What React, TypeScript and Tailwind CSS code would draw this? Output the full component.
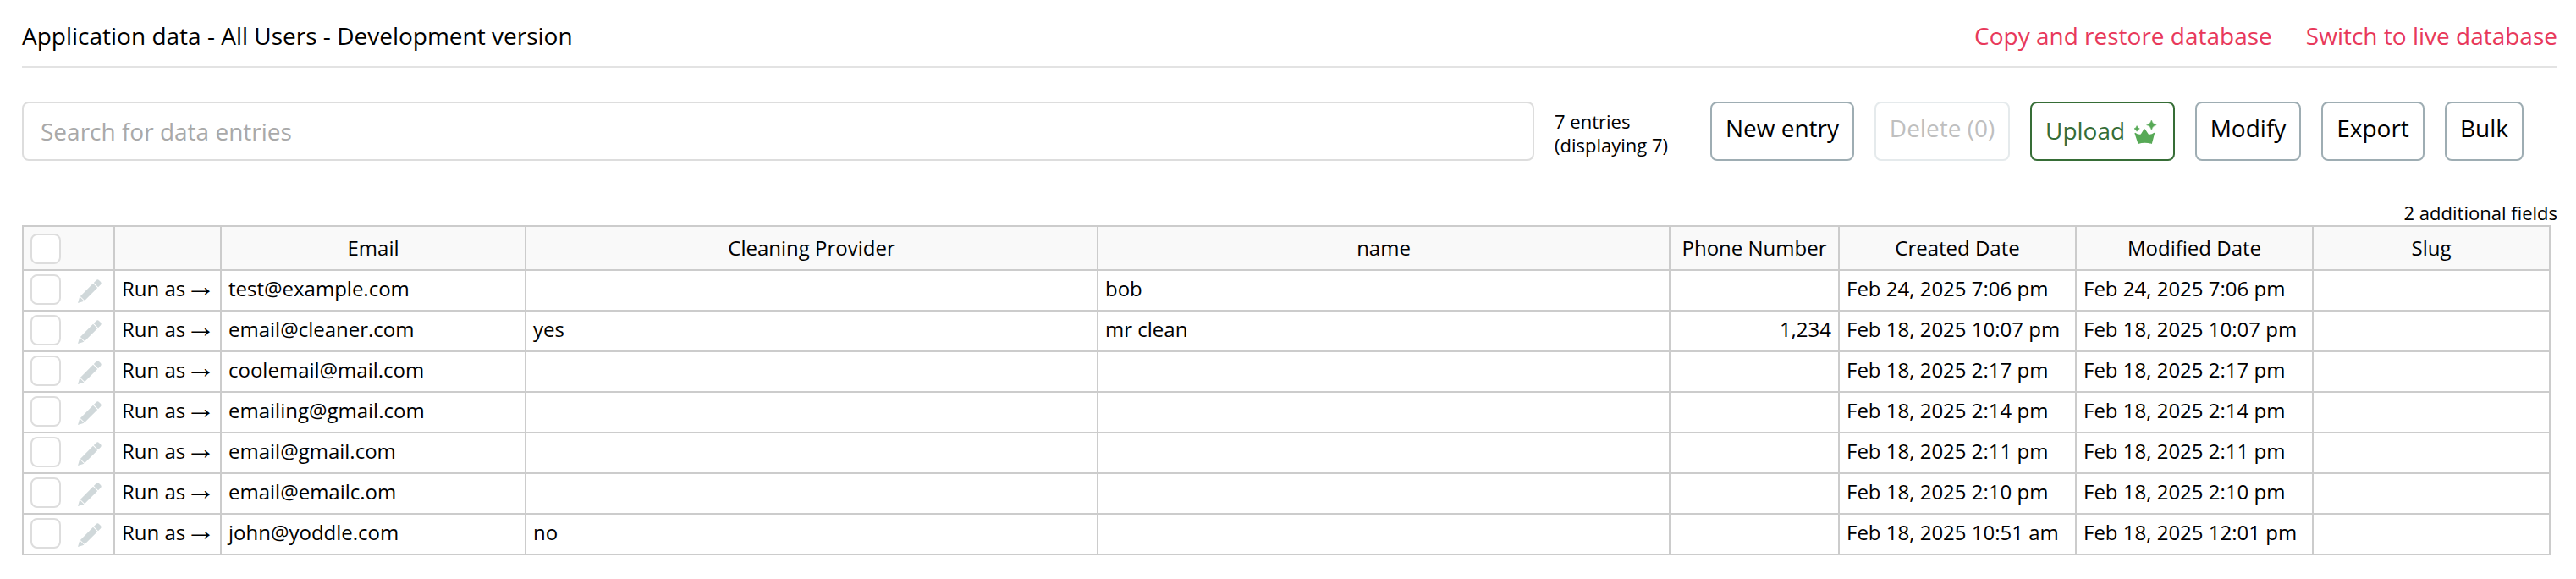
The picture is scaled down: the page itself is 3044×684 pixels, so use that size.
import React from "react";

type Entry = {
  email: string;
  provider?: string;
  name?: string;
  phone?: string;
  created: string;
  modified: string;
};

const entries: Entry[] = [
  { email: "test@example.com", name: "bob", created: "Feb 24, 2025 7:06 pm", modified: "Feb 24, 2025 7:06 pm" },
  { email: "email@cleaner.com", provider: "yes", name: "mr clean", phone: "1,234", created: "Feb 18, 2025 10:07 pm", modified: "Feb 18, 2025 10:07 pm" },
  { email: "coolemail@mail.com", created: "Feb 18, 2025 2:17 pm", modified: "Feb 18, 2025 2:17 pm" },
  { email: "emailing@gmail.com", created: "Feb 18, 2025 2:14 pm", modified: "Feb 18, 2025 2:14 pm" },
  { email: "email@gmail.com", created: "Feb 18, 2025 2:11 pm", modified: "Feb 18, 2025 2:11 pm" },
  { email: "email@emailc.om", created: "Feb 18, 2025 2:10 pm", modified: "Feb 18, 2025 2:10 pm" },
  { email: "john@yoddle.com", provider: "no", created: "Feb 18, 2025 10:51 am", modified: "Feb 18, 2025 12:01 pm" },
];

const headers = ["Email", "Cleaning Provider", "name", "Phone Number", "Created Date", "Modified Date", "Slug"];

function Checkbox() {
  return <span className="block size-9 shrink-0 rounded-lg border-2 border-[#dddddd] bg-white" />;
}

function Pencil() {
  return (
    <svg viewBox="0 0 28 28" className="size-7 shrink-0" fill="#d0d8da">
      <path d="M0 28 L2.2 20.6 L7.4 25.8 Z" />
      <path d="M2.9 19.9 L18 4.8 L23.2 10 L8.1 25.1 Z" />
      <path d="M18.8 4 L21.6 1.2 Q23.4 -0.6 25.2 1.2 L26.8 2.8 Q28.6 4.6 26.8 6.4 L24 9.2 Z" />
    </svg>
  );
}

function Crown() {
  return (
    <svg viewBox="0 0 27 28" className="h-7 w-[27px] shrink-0" fill="#57a956">
      <path d="M1.2 14.7 Q4.5 17.6 7.8 16.6 L11.4 10.8 Q12.2 9.6 13 10.8 L16.8 16.6 Q20 17.6 23.4 14.7 Q24.4 14.8 24 16 L20.8 28 Q12.7 25.6 4.6 28 L0.6 16 Q0.2 14.8 1.2 14.7 Z" />
      <path d="M20.4 0 Q21.4 4.6 26.2 5.6 Q21.4 6.6 20.4 11.4 Q19.4 6.6 14.6 5.6 Q19.4 4.6 20.4 0 Z" stroke="#57a956" strokeWidth="0.5" />
      <path d="M3.1 6.6 Q3.6 9.3 6.3 9.9 Q3.6 10.5 3.1 13.2 Q2.6 10.5 0 9.9 Q2.6 9.3 3.1 6.6 Z" stroke="#57a956" strokeWidth="0.6" />
    </svg>
  );
}

const buttonBase = "flex h-[70px] shrink-0 justify-center rounded-lg border-2 pt-[10px] text-[28px] leading-[38px]";

export default function App() {
  return (
    <div className="h-[684px] w-[3044px] overflow-hidden bg-white pl-[26px] pr-[22px] font-['Open_Sans',sans-serif] text-black">
      <header className="flex h-20 items-start justify-between border-b-2 border-[#e3e3e3] pt-[23px] text-[28px] leading-[38px]">
        <h1>Application data - All Users - Development version</h1>
        <nav className="flex gap-10 text-[#e8395b]">
          <a>Copy and restore database</a>
          <a>Switch to live database</a>
        </nav>
      </header>

      <div className="mt-10 flex h-[70px] items-start">
        <input
          className="h-[70px] w-[1787px] shrink-0 rounded-lg border-2 border-[#dddddd] px-5 text-[28px] placeholder:text-[#a9a9a9]"
          placeholder="Search for data entries"
        />
        <div className="ml-6 w-[184px] shrink-0 pt-[9px] text-[22px] leading-7">
          7 entries
          <br />
          (displaying 7)
        </div>
        <div className="flex gap-6">
          <button className={`${buttonBase} w-[170px] border-[#9eadb3]`}>New entry</button>
          <button className={`${buttonBase} w-[160px] border-[#e5eaec] text-[#bfbfbf]`}>Delete (0)</button>
          <button className="flex h-[70px] w-[171px] shrink-0 items-start gap-[11px] rounded-lg border-2 border-[#366d36] pl-4 pt-[13px] text-[28px] leading-[38px] text-[#366d36]">
            Upload
            <span className="mt-[7px]">
              <Crown />
            </span>
          </button>
          <button className={`${buttonBase} w-[125px] border-[#9eadb3]`}>Modify</button>
          <button className={`${buttonBase} w-[122px] border-[#9eadb3]`}>Export</button>
          <button className={`${buttonBase} w-[93px] border-[#9eadb3]`}>Bulk</button>
        </div>
      </div>

      <div className="mt-[46px] h-[30px] text-right text-[22px] leading-[30px]">2 additional fields</div>

      <table className="w-[2988px] table-fixed border-collapse text-[24px] leading-[33px] [&_td]:border-2 [&_td]:border-[#cccccc] [&_td]:px-2 [&_td]:pb-0 [&_td]:pt-1 [&_td]:align-top [&_th]:border-2 [&_th]:border-[#cccccc] [&_th]:p-0 [&_th]:pt-2 [&_th]:align-top [&_th]:font-normal">
        <colgroup>
          <col className="w-[108px]" />
          <col className="w-[126px]" />
          <col className="w-[360px]" />
          <col className="w-[676px]" />
          <col className="w-[676px]" />
          <col className="w-[200px]" />
          <col className="w-[280px]" />
          <col className="w-[280px]" />
          <col className="w-[280px]" />
        </colgroup>
        <thead>
          <tr className="h-[52px] bg-[#f9f9f9]">
            <th>
              <div className="pl-2">
                <Checkbox />
              </div>
            </th>
            <th />
            {headers.map((h) => (
              <th key={h}>{h}</th>
            ))}
          </tr>
        </thead>
        <tbody>
          {entries.map((e) => (
            <tr key={e.email} className="h-12">
              <td>
                <div className="flex items-start gap-5">
                  <Checkbox />
                  <div className="pt-1.5">
                    <Pencil />
                  </div>
                </div>
              </td>
              <td>
                <div className="flex items-baseline whitespace-nowrap">
                  <span>Run as </span>
                  <span className="font-['Liberation_Sans',sans-serif] text-[36px] leading-[0px]">→</span>
                </div>
              </td>
              <td>{e.email}</td>
              <td>{e.provider}</td>
              <td>{e.name}</td>
              <td className="text-right">{e.phone}</td>
              <td>{e.created}</td>
              <td>{e.modified}</td>
              <td />
            </tr>
          ))}
        </tbody>
      </table>
    </div>
  );
}
